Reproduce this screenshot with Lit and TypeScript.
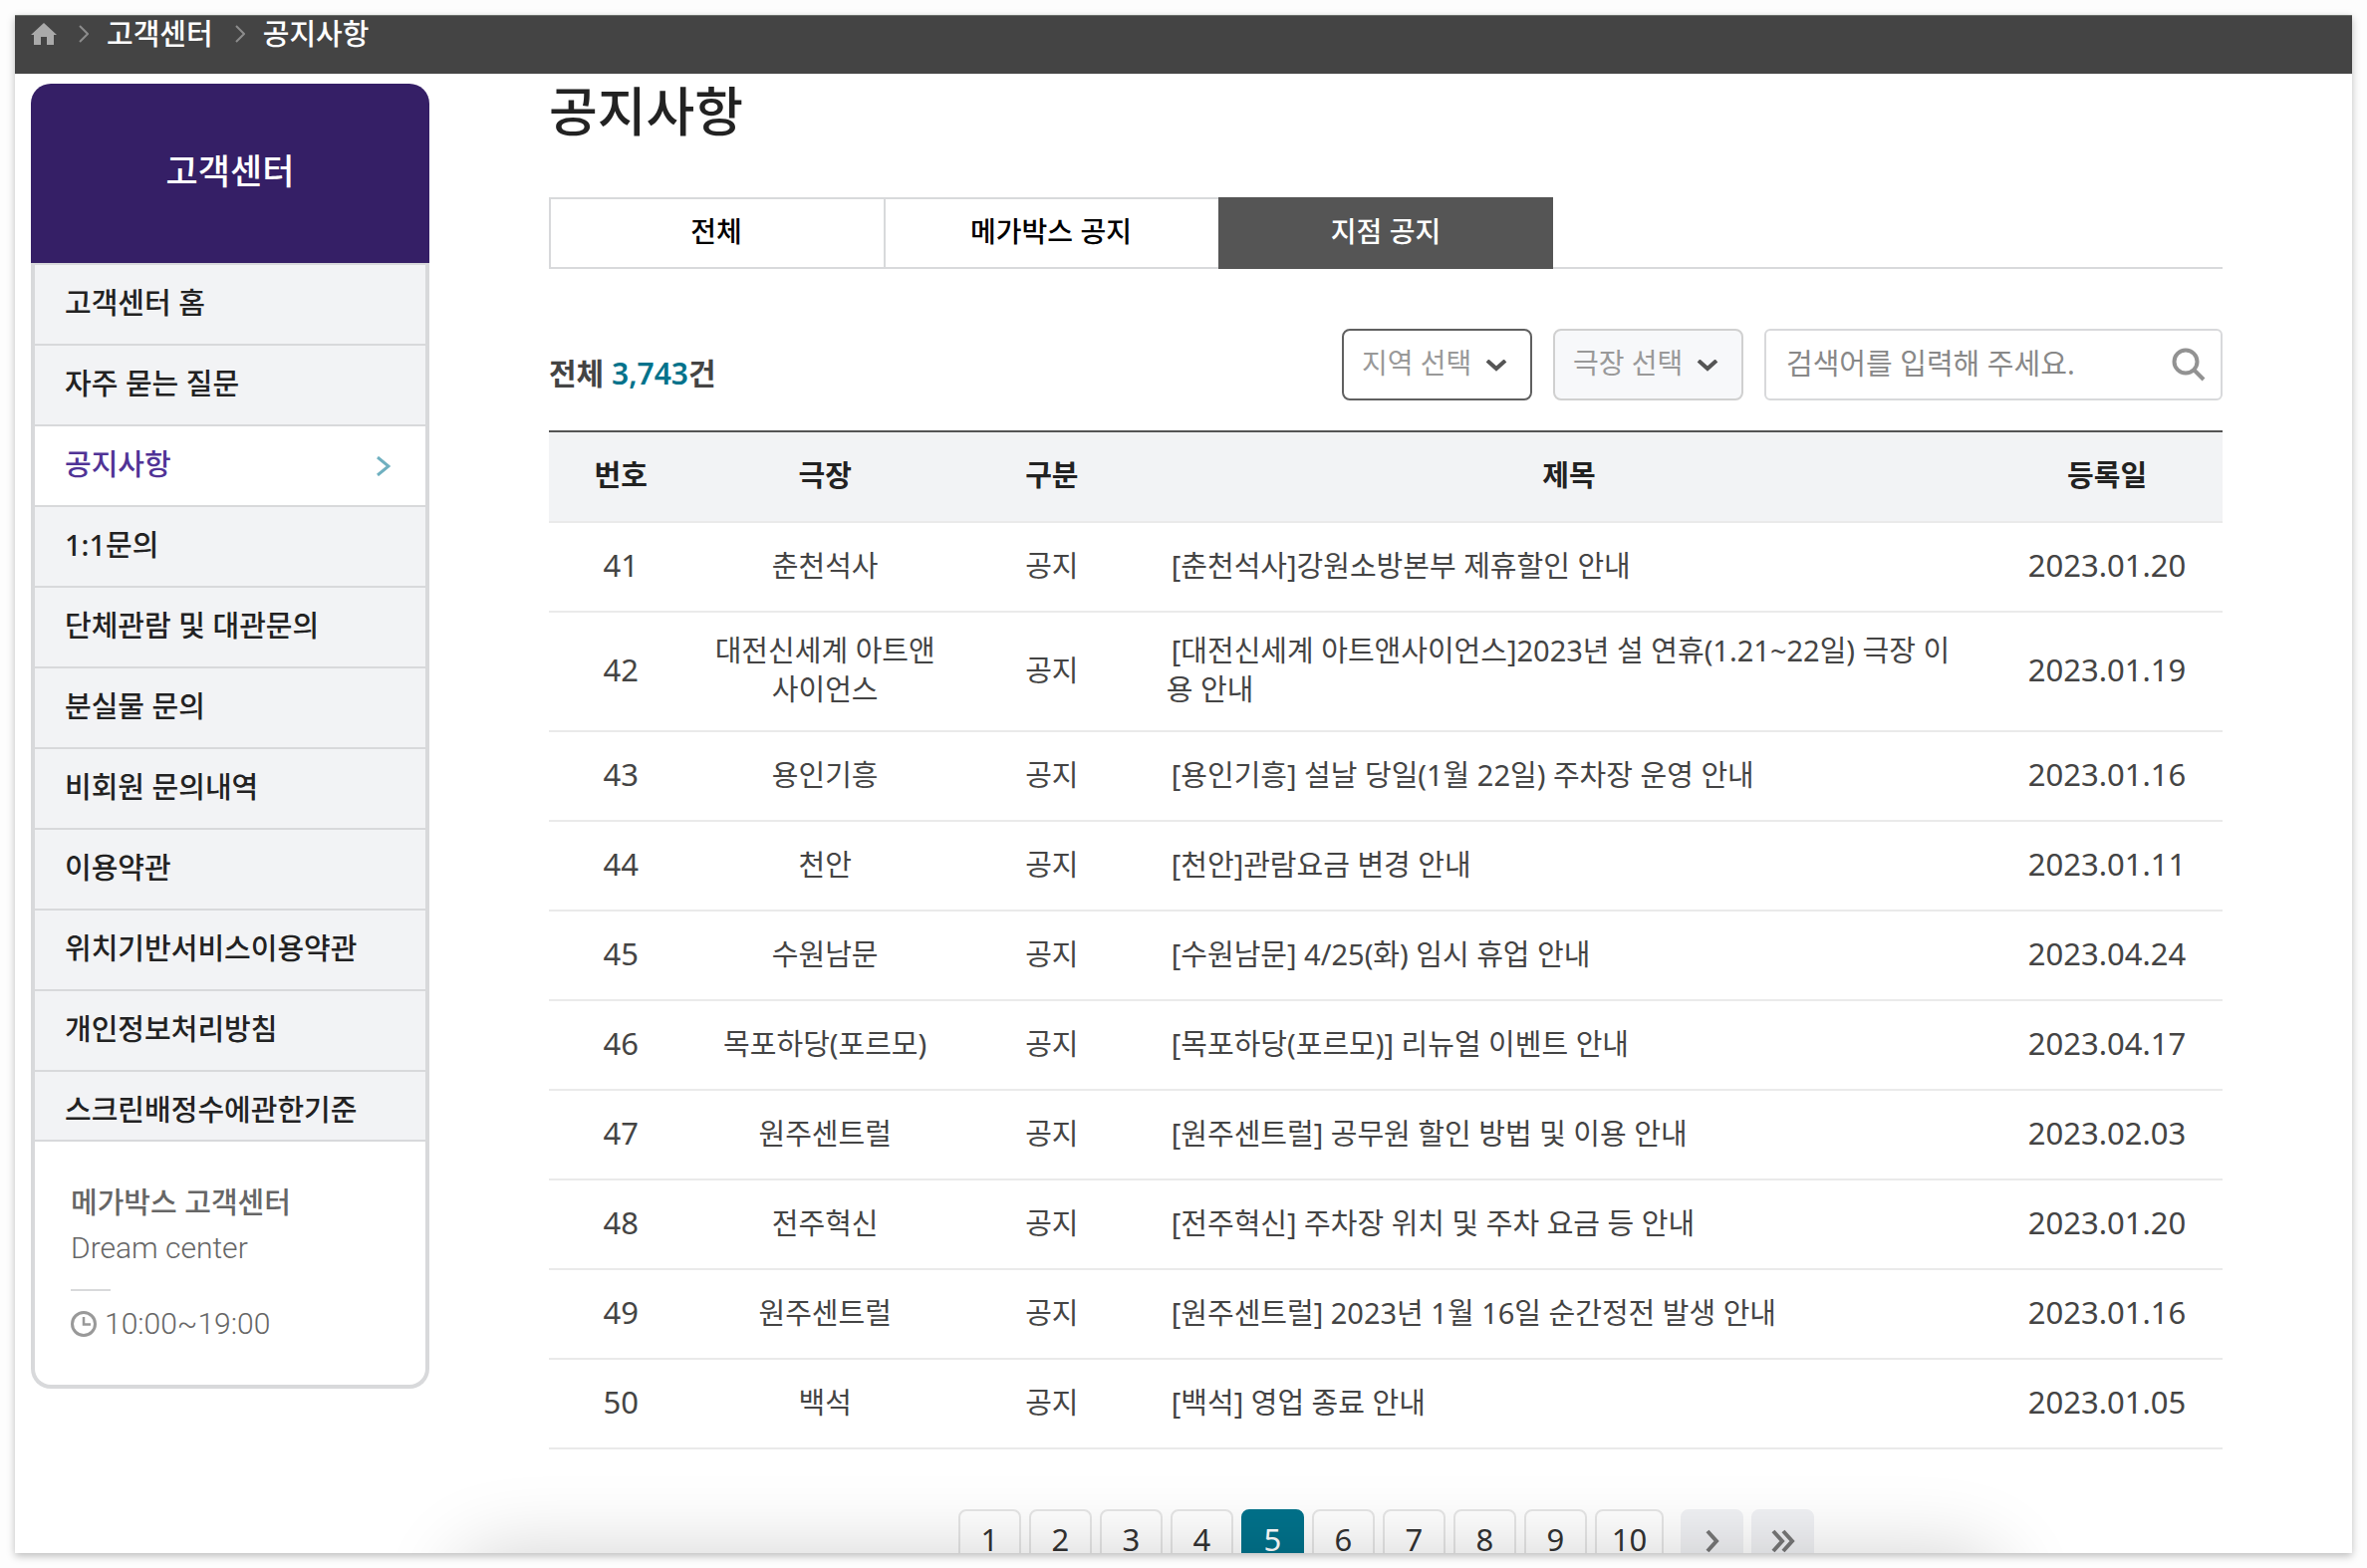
import { LitElement, html, css, svg } from "lit";
import { customElement, state } from "lit/decorators.js";
import { classMap } from "lit/directives/class-map.js";

interface Notice {
  no: number;
  theater: string;
  title: string;
  date: string;
}

const MENU = [
  "고객센터 홈",
  "자주 묻는 질문",
  "공지사항",
  "1:1문의",
  "단체관람 및 대관문의",
  "분실물 문의",
  "비회원 문의내역",
  "이용약관",
  "위치기반서비스이용약관",
  "개인정보처리방침",
  "스크린배정수에관한기준",
];

const TABS = ["전체", "메가박스 공지", "지점 공지"];

const NOTICES: Notice[] = [
  { no: 41, theater: "춘천석사", title: "[춘천석사]강원소방본부 제휴할인 안내", date: "2023.01.20" },
  { no: 42, theater: "대전신세계 아트앤사이언스", title: "[대전신세계 아트앤사이언스]2023년 설 연휴(1.21~22일) 극장 이용 안내", date: "2023.01.19" },
  { no: 43, theater: "용인기흥", title: "[용인기흥] 설날 당일(1월 22일) 주차장 운영 안내", date: "2023.01.16" },
  { no: 44, theater: "천안", title: "[천안]관람요금 변경 안내", date: "2023.01.11" },
  { no: 45, theater: "수원남문", title: "[수원남문] 4/25(화) 임시 휴업 안내", date: "2023.04.24" },
  { no: 46, theater: "목포하당(포르모)", title: "[목포하당(포르모)] 리뉴얼 이벤트 안내", date: "2023.04.17" },
  { no: 47, theater: "원주센트럴", title: "[원주센트럴] 공무원 할인 방법 및 이용 안내", date: "2023.02.03" },
  { no: 48, theater: "전주혁신", title: "[전주혁신] 주차장 위치 및 주차 요금 등 안내", date: "2023.01.20" },
  { no: 49, theater: "원주센트럴", title: "[원주센트럴] 2023년 1월 16일 순간정전 발생 안내", date: "2023.01.16" },
  { no: 50, theater: "백석", title: "[백석] 영업 종료 안내", date: "2023.01.05" },
];

const PAGES = [1, 2, 3, 4, 5, 6, 7, 8, 9, 10];

const crumbArrow = svg`<svg class="crumb-arrow" viewBox="0 0 10 18" width="10" height="18" aria-hidden="true"><path d="M1 1 L9 9 L1 17" fill="none" stroke="#8c8c8c" stroke-width="2"/></svg>`;
const caret = svg`<svg class="caret" viewBox="0 0 22 12" width="22" height="12" aria-hidden="true"><path d="M2 1 L11 9 L20 1" fill="none" stroke="#555" stroke-width="4"/></svg>`;

@customElement("app-root")
export class AppRoot extends LitElement {
  @state() private tab = 2;
  @state() private page = 5;

  static styles = css`
    :host {
      display: block;
      box-sizing: border-box;
      height: 100vh;
      padding: 15px;
      background: #fdfdfd;
      font-family: "Noto Sans", "Noto Sans CJK KR", sans-serif;
      font-size: 29px;
      line-height: 40px;
      color: #444;
    }
    *, *::before, *::after { box-sizing: border-box; }
    a { color: inherit; text-decoration: none; }
    button, input, select { font: inherit; color: inherit; margin: 0; }
    h1, h2, p, ul, ol { margin: 0; padding: 0; list-style: none; font-weight: 500; }
    svg { display: block; }

    .window {
      position: relative;
      display: flex;
      flex-direction: column;
      height: 100%;
      overflow: hidden;
      background: #fff;
    }
    .frame { height: 100%; box-shadow: 0 3px 8px rgba(0, 0, 0, 0.26); }

    .crumbs {
      display: flex;
      flex: none;
      align-items: flex-start;
      height: 59px;
      padding: 0 16px;
      background: #444;
      border-top: 1px solid #6a6e6a;
      color: #fff;
      font-weight: 500;
      line-height: 36px;
    }
    .crumbs ol, .crumbs li { display: flex; align-items: center; }
    .crumb-arrow { margin: 0 18px 0 22px; }

    .body { display: flex; align-items: flex-start; padding: 0 130px 0 16px; }
    .side { flex: none; width: 400px; margin: 10px 120px 0 0; }
    .side-title {
      display: flex;
      align-items: center;
      justify-content: center;
      height: 180px;
      padding-bottom: 4px;
      border-radius: 20px 20px 0 0;
      background: #351f66;
      color: #fff;
      font-size: 35px;
      font-weight: 500;
    }
    .menu { border: solid #d8d9db; border-width: 2px 4px 0; }
    .menu li { border-bottom: 2px solid #d8d9db; }
    .menu a {
      display: flex;
      align-items: flex-start;
      justify-content: space-between;
      height: 79px;
      padding: 18px 35px 0 30px;
      background: #f2f3f5;
      color: #222;
      font-weight: 500;
    }
    .menu svg { margin-top: 12px; }
    .menu li:last-child a { height: 68px; }
    .menu a.current { background: #fff; color: #503396; }
    .contact {
      display: flex;
      flex-direction: column;
      padding: 38px 36px;
      border: solid #d8d9db;
      border-width: 0 4px 4px;
      border-radius: 0 0 20px 20px;
      color: #666;
      line-height: 46px;
    }
    .contact h2 { font-size: 29px; }
    .latin { font-family: Roboto, "Noto Sans CJK KR", sans-serif; font-size: 30px; font-weight: 300; }
    .contact .latin:last-child { display: flex; align-items: center; gap: 8px; }
    .rule { width: 40px; height: 2px; margin: 18px 0 10px; border: 0; background: #d8d9db; }

    .main { flex: 1; min-width: 0; }
    h1 { padding-top: 6px; font-size: 53px; line-height: 64px; color: #222; }

    .tabs { display: flex; margin-top: 54px; border-bottom: 2px solid #d8d9db; }
    .tabs button {
      flex: 0 0 20%;
      height: 72px;
      margin: 0 0 -2px;
      padding: 0 2px 4px 0;
      border: 2px solid #d8d9db;
      border-right-width: 0;
      border-radius: 0;
      background: #fff;
      color: #000;
      font-size: 28px;
      font-weight: 500;
    }
    .tabs button.on { border-color: #555; background: #555; color: #fff; }

    .tools { display: flex; gap: 21px; margin: 60px 0 30px; }
    .total { flex: 1; align-self: flex-end; padding-bottom: 7px; font-size: 30px; font-weight: 700; }
    .total strong { color: #02728b; font-weight: 600; }
    .pick { position: relative; display: block; width: 191px; height: 72px; }
    .pick select {
      appearance: none;
      width: 100%;
      height: 100%;
      padding: 0 40px 4px 18px;
      border: 2px solid #606060;
      border-radius: 8px;
      background: #fff;
      color: #999;
      font-size: 28px;
      opacity: 1;
    }
    .pick select:disabled { border-color: #d0d0d0; background: #f7f8fa; }
    .caret { position: absolute; right: 25px; top: 31px; }
    .search {
      display: flex;
      align-items: center;
      width: 460px;
      height: 72px;
      padding: 0 15px 0 20px;
      border: 2px solid #d8d9db;
      border-radius: 6px;
      background: #fff;
    }
    .search input { flex: 1; min-width: 0; height: 100%; padding: 0 0 4px; border: 0; outline: 0; background: none; }
    .search input::placeholder { color: #888; opacity: 1; }
    .search button { padding: 0; border: 0; background: none; }

    table { width: 100%; table-layout: fixed; border-collapse: collapse; border-top: 2px solid #555; line-height: 39px; }
    th { height: 91px; padding: 0 0 4px; background: #f2f3f5; color: #222; font-weight: 700; }
    td { height: 90px; padding: 18px 20px 22px; text-align: center; }
    tr { border-bottom: 2px solid #eaeaea; }
    td.title { padding-right: 32px; text-align: left; text-indent: 5px; }
    td.num, td.date { padding-left: 0; padding-right: 0; font-size: 31px; }
    .c-no { width: 8.6%; }
    .c-theater { width: 15.8%; }
    .c-kind { width: 11.3%; }
    .c-date { width: 13.8%; }

    .pages { display: flex; justify-content: center; gap: 8px; margin-top: 60px; padding-left: 1px; }
    .pages button {
      min-width: 63px;
      height: 64px;
      padding: 0 15px 4px;
      border: 2px solid #e6e6e6;
      border-radius: 8px;
      background: #fff;
      color: #333;
      font-size: 31px;
    }
    .pages button.on { border-color: #02728b; background: #02728b; color: #fff; }
    .pages button.jump { display: flex; align-items: center; justify-content: center; padding: 0; border-color: #f0f1f4; background: #f0f1f4; }
    .pages button.first-jump { margin-left: 9px; }

    .shade {
      position: absolute;
      left: 19%;
      right: 15%;
      top: 100%;
      height: 200px;
      border-radius: 40px;
      box-shadow: 0 0 80px rgba(0, 0, 0, 0.18);
      pointer-events: none;
    }
  `;

  render() {
    return html`
      <div class="frame">
        <div class="window">
          <nav class="crumbs" aria-label="현재 위치">
            <ol>
              <li>
                <a href="#" aria-label="홈">
                  <svg viewBox="0 0 26 22" width="26" height="22" aria-hidden="true"><path d="M13 0 L26 12 H23 V22 H16 V14 H10 V22 H3 V12 H0 Z" fill="#aaa"/></svg>
                </a>
              </li>
              <li>${crumbArrow}<a href="#">고객센터</a></li>
              <li>${crumbArrow}<a href="#">공지사항</a></li>
            </ol>
          </nav>
          <div class="body">
            <aside class="side">
              <p class="side-title">고객센터</p>
              <ul class="menu">
                ${MENU.map(
                  (name) => html`<li>
                    <a href="#" class=${classMap({ current: name === "공지사항" })}>${name}${name === "공지사항"
                      ? html`<svg viewBox="0 0 14 20" width="14" height="20" aria-hidden="true"><path d="M1 1 L12 10 L1 19" fill="none" stroke="#6fb0c0" stroke-width="3"/></svg>`
                      : ""}</a>
                  </li>`
                )}
              </ul>
              <section class="contact">
                <h2>메가박스 고객센터</h2>
                <p class="latin">Dream center</p>
                <hr class="rule" />
                <p class="latin">
                  <svg viewBox="0 0 26 28" width="26" height="28" aria-hidden="true"><g fill="none" stroke="#999" stroke-width="3"><circle cx="13" cy="14" r="11.5"/><path d="M13 7 V14.5 H20" stroke-width="2.5"/></g></svg>10:00~19:00
                </p>
              </section>
            </aside>
            <main class="main">
              <h1>공지사항</h1>
              <div class="tabs" role="tablist">
                ${TABS.map(
                  (name, i) => html`<button role="tab" aria-selected=${i === this.tab} class=${classMap({ on: i === this.tab })} @click=${() => (this.tab = i)}>${name}</button>`
                )}
              </div>
              <div class="tools">
                <p class="total">전체 <strong>3,743</strong>건</p>
                <label class="pick"><select aria-label="지역 선택"><option>지역 선택</option></select>${caret}</label>
                <label class="pick"><select aria-label="극장 선택" disabled><option>극장 선택</option></select>${caret}</label>
                <form class="search" @submit=${(e: Event) => e.preventDefault()}>
                  <input type="text" aria-label="검색어" placeholder="검색어를 입력해 주세요." />
                  <button aria-label="검색">
                    <svg viewBox="0 0 34 34" width="34" height="34" aria-hidden="true"><g fill="none" stroke="#929292" stroke-width="4"><circle cx="14" cy="14" r="11.5"/><path d="M22 22 L32 32"/></g></svg>
                  </button>
                </form>
              </div>
              <table>
                <thead>
                  <tr>
                    <th class="c-no">번호</th>
                    <th class="c-theater">극장</th>
                    <th class="c-kind">구분</th>
                    <th>제목</th>
                    <th class="c-date">등록일</th>
                  </tr>
                </thead>
                <tbody>
                  ${NOTICES.map(
                    (n) => html`<tr>
                      <td class="num">${n.no}</td>
                      <td>${n.theater}</td>
                      <td>공지</td>
                      <td class="title"><a href="#">${n.title}</a></td>
                      <td class="date">${n.date}</td>
                    </tr>`
                  )}
                </tbody>
              </table>
              <nav class="pages" aria-label="페이지">
                ${PAGES.map(
                  (p) => html`<button class=${classMap({ on: p === this.page })} @click=${() => (this.page = p)}>${p}</button>`
                )}
                <button class="jump first-jump" aria-label="다음">
                  <svg viewBox="0 0 14 24" width="14" height="24" aria-hidden="true"><path d="M2 2 L11 12 L2 22" fill="none" stroke="#777" stroke-width="4"/></svg>
                </button>
                <button class="jump" aria-label="마지막">
                  <svg viewBox="0 0 24 24" width="24" height="24" aria-hidden="true"><path d="M2 2 L11 12 L2 22 M12 2 L21 12 L12 22" fill="none" stroke="#777" stroke-width="4"/></svg>
                </button>
              </nav>
            </main>
          </div>
          <div class="shade"></div>
        </div>
      </div>
    `;
  }
}
